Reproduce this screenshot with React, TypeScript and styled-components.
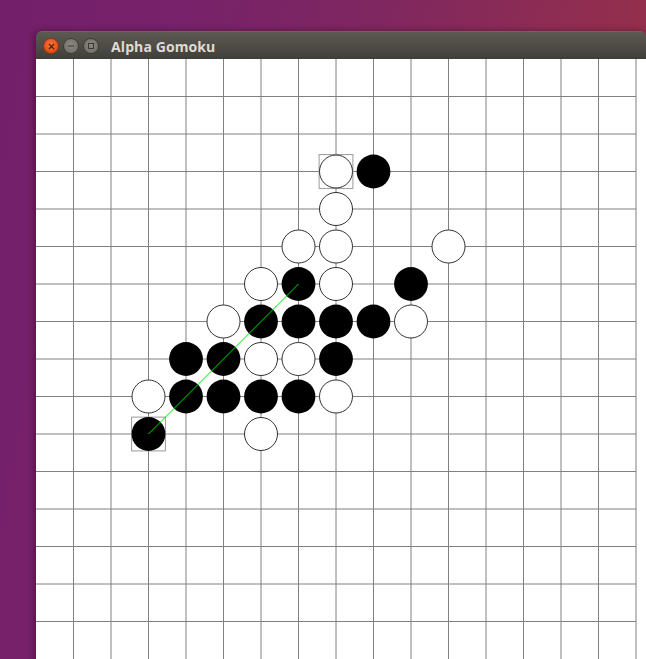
import React from "react";
import styled, { createGlobalStyle } from "styled-components";

const GlobalStyle = createGlobalStyle`
  html, body { margin: 0; padding: 0; }
  body { width: 646px; height: 659px; overflow: hidden; }
`;

const Desktop = styled.div`
  width: 646px;
  height: 659px;
  overflow: hidden;
  box-sizing: border-box;
  padding: 31px 0 0 36px;
  background:
    linear-gradient(100deg, #741f6a 0%, #77226a 25%, #7f2760 50%, #8f2d52 75%, #9b3244 100%);
  display: flex;
  align-items: flex-start;
`;

const Window = styled.div`
  width: 610px;
  height: 640px;
  flex: none;
  display: flex;
  flex-direction: column;
  border-radius: 6px 6px 0 0;
  overflow: hidden;
  box-shadow: -2px 0 6px rgba(40, 0, 30, 0.45);
`;

const TitleBar = styled.div`
  height: 28px;
  flex: none;
  display: flex;
  align-items: center;
  padding-left: 7px;
  gap: 4px;
  background: linear-gradient(to bottom, #5b5951 0%, #4c4a44 60%, #3f3e39 100%);
  border-top: 1px solid #6a675e;
  box-sizing: border-box;
`;

const WinButton = styled.div<{ $kind: "close" | "min" | "max" }>`
  width: 16px;
  height: 16px;
  border-radius: 50%;
  box-sizing: border-box;
  display: flex;
  align-items: center;
  justify-content: center;
  background: ${(p) =>
    p.$kind === "close"
      ? "radial-gradient(circle at 50% 40%, #f37a45 0%, #e9521d 60%, #c8400f 100%)"
      : "radial-gradient(circle at 50% 40%, #8a877f 0%, #75736b 70%, #63615a 100%)"};
  border: 1px solid ${(p) => (p.$kind === "close" ? "#9c3410" : "#3e3d38")};
  margin-top: 1px;
`;

const Title = styled.span`
  margin-left: 8px;
  font-family: "Open Sans", "DejaVu Sans", sans-serif;
  font-weight: 700;
  font-size: 14px;
  color: #dfdbd2;
  letter-spacing: 0.1px;
  margin-top: 1px;
`;

const Canvas = styled.div`
  flex: 1;
  background: #ffffff;
  display: flex;
`;

const Board = styled.svg`
  display: block;
  flex: none;
`;

const CELL = 37.5;
const R = 16.9;

type Stone = [number, number];

const blacks: Stone[] = [
  [8, 2], [6, 5], [9, 5], [5, 6], [6, 6], [7, 6], [8, 6],
  [3, 7], [4, 7], [7, 7], [3, 8], [4, 8], [5, 8], [6, 8], [2, 9],
];
const whites: Stone[] = [
  [7, 2], [7, 3], [6, 4], [7, 4], [10, 4], [5, 5], [7, 5],
  [4, 6], [9, 6], [5, 7], [6, 7], [2, 8], [7, 8], [5, 9],
];

const cx = (i: number) => CELL * (i + 1);

function Glyph({ kind }: { kind: "close" | "min" | "max" }) {
  if (kind === "close")
    return (
      <svg width="7" height="7" viewBox="0 0 7 7">
        <path d="M1 1 L6 6 M6 1 L1 6" stroke="#5a1a05" strokeWidth="1.2" />
      </svg>
    );
  if (kind === "min")
    return (
      <svg width="8" height="8" viewBox="0 0 8 8">
        <path d="M1 4 H7" stroke="#3a3934" strokeWidth="1.2" />
      </svg>
    );
  return (
    <svg width="8" height="8" viewBox="0 0 8 8">
      <rect x="1.5" y="1.5" width="5" height="5" fill="none" stroke="#3a3934" strokeWidth="1" />
    </svg>
  );
}

export default function App() {
  const vLines = Array.from({ length: 16 }, (_, k) => CELL * (k + 1));
  const hLines = Array.from({ length: 15 }, (_, k) => CELL * (k + 1));
  const highlights: Stone[] = [[7, 2], [2, 9]];
  const sq = R;
  return (
    <>
      <GlobalStyle />
      <Desktop>
        <Window>
          <TitleBar>
            <WinButton $kind="close"><Glyph kind="close" /></WinButton>
            <WinButton $kind="min"><Glyph kind="min" /></WinButton>
            <WinButton $kind="max"><Glyph kind="max" /></WinButton>
            <Title>Alpha Gomoku</Title>
          </TitleBar>
          <Canvas>
            <Board width={610} height={612} viewBox="0 0 610 612">
              {vLines.map((x) => (
                <line key={"v" + x} x1={x} y1={0} x2={x} y2={600} stroke="#808080" strokeWidth={1} />
              ))}
              {hLines.map((y) => (
                <line key={"h" + y} x1={0} y1={y} x2={600} y2={y} stroke="#808080" strokeWidth={1} />
              ))}
              {highlights.map(([i, j], n) => (
                <rect
                  key={"s" + n}
                  x={cx(i) - sq}
                  y={cx(j) - sq}
                  width={sq * 2}
                  height={sq * 2}
                  fill="#ffffff"
                  stroke="#999999"
                  strokeWidth={1}
                />
              ))}
              {whites.map(([i, j]) => (
                <circle key={"w" + i + "-" + j} cx={cx(i)} cy={cx(j)} r={R - 0.4} fill="#ffffff" stroke="#1a1a1a" strokeWidth={0.9} />
              ))}
              {blacks.map(([i, j]) => (
                <circle key={"b" + i + "-" + j} cx={cx(i)} cy={cx(j)} r={R} fill="#000000" />
              ))}
              <line x1={cx(2)} y1={cx(9)} x2={cx(6)} y2={cx(5)} stroke="#00e000" strokeWidth={1} />
            </Board>
          </Canvas>
        </Window>
      </Desktop>
    </>
  );
}
